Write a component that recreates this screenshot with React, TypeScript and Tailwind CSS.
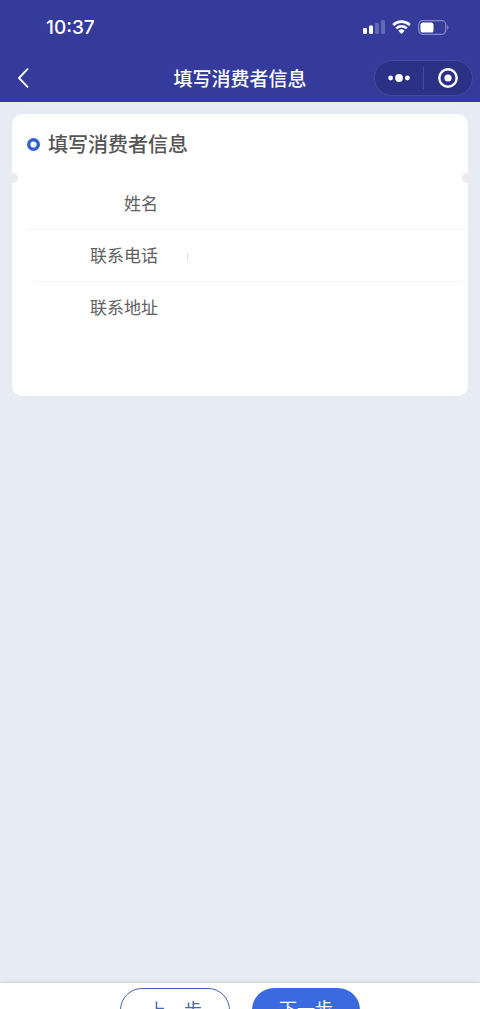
import { clsx } from 'clsx';

const fields = [
  { id: 'name', label: '姓名', type: 'text', line: 'ml-[14px]' },
  { id: 'phone', label: '联系电话', type: 'tel', line: 'ml-[22px] mr-2' },
  { id: 'address', label: '联系地址', type: 'text', line: '' },
];

function StatusBar() {
  return (
    <div className="flex h-[54px] items-center justify-between pr-[30px] pl-[46px]">
      <span className="pt-0.5 font-['Inter',sans-serif] text-[19px] leading-6 font-medium">
        10:37
      </span>
      <div className="flex items-center gap-[7px]">
        <svg width="22" height="14" viewBox="0 0 22 14" fill="currentColor">
          <rect x="0" y="8" width="4" height="6" rx="1.2" />
          <rect x="6" y="5.5" width="4" height="8.5" rx="1.2" />
          <rect x="12" y="3" width="4" height="11" rx="1.2" opacity=".24" />
          <rect x="18" y="0" width="4" height="14" rx="1.2" opacity=".24" />
        </svg>
        <svg width="19" height="14" viewBox="0 0 19 14" fill="none">
          <path
            d="M1.2 5A12 12 0 0 1 17.8 5M4.2 8.4A7.7 7.7 0 0 1 14.8 8.4"
            stroke="currentColor"
            strokeWidth="2.6"
          />
          <path
            d="M6.4 10.7a4.6 4.6 0 0 1 6.2 0L9.5 14z"
            fill="currentColor"
          />
        </svg>
        <svg width="32" height="15" viewBox="0 0 32 15" fill="none">
          <rect
            x=".7"
            y=".7"
            width="27"
            height="13.6"
            rx="4"
            stroke="currentColor"
            strokeWidth="1.2"
            opacity=".4"
          />
          <rect
            x="2.5"
            y="2.4"
            width="13"
            height="10.2"
            rx="2.2"
            fill="currentColor"
          />
          <path
            d="M29.3 5.2c1.4.5 1.4 4.1 0 4.6z"
            fill="currentColor"
            opacity=".5"
          />
        </svg>
      </div>
    </div>
  );
}

function NavBar() {
  return (
    <div className="grid h-12 grid-cols-[1fr_auto_1fr] items-center px-[7px]">
      <button aria-label="返回" className="justify-self-start pl-[9px]">
        <svg width="14" height="20" viewBox="0 0 14 20" fill="none">
          <path
            d="M11.5 1.2 3 10l8.5 8.8"
            stroke="currentColor"
            strokeWidth="1.8"
            strokeLinecap="round"
            strokeLinejoin="round"
          />
        </svg>
      </button>
      <h1 className="text-[19px] leading-7 font-medium">填写消费者信息</h1>
      <div className="flex h-9 w-[99px] items-center justify-self-end rounded-full border border-[#4349a4] bg-[#2b3185]">
        <button aria-label="更多" className="flex flex-1 justify-center">
          <svg width="22" height="8" viewBox="0 0 22 8" fill="currentColor">
            <circle cx="2.6" cy="4" r="2.4" />
            <circle cx="11" cy="4" r="3.9" />
            <circle cx="19.4" cy="4" r="2.4" />
          </svg>
        </button>
        <span className="h-[22px] w-px bg-[#454b9d]" />
        <button aria-label="关闭" className="flex flex-1 justify-center">
          <svg width="20" height="20" viewBox="0 0 20 20" fill="none">
            <circle
              cx="10"
              cy="10"
              r="8.7"
              stroke="currentColor"
              strokeWidth="2.4"
            />
            <circle cx="10" cy="10" r="3.6" fill="currentColor" />
          </svg>
        </button>
      </div>
    </div>
  );
}

function ConsumerCard() {
  return (
    <section className="relative rounded-[10px] bg-white pb-[63px] shadow-[0_0_4px_rgba(225,230,232,0.8)]">
      <div className="flex h-16 items-center gap-2 pb-1 pl-[15px]">
        <svg width="13" height="13" viewBox="0 0 13 13">
          <circle
            cx="6.5"
            cy="6.5"
            r="4.8"
            fill="white"
            stroke="#3560d2"
            strokeWidth="3.4"
          />
        </svg>
        <h2 className="text-xl leading-7 font-medium text-[#555]">
          填写消费者信息
        </h2>
      </div>
      <span className="absolute top-[59px] -left-1 size-[10px] rounded-full bg-[#e9ebef]" />
      <span className="absolute top-[59px] -right-1 size-[10px] rounded-full bg-[#e9ebef]" />
      <form>
        {fields.map(({ id, label, type, line }) => (
          <div key={id}>
            <div className="flex h-[51px] items-center pb-px">
              <label
                htmlFor={id}
                className="w-[146px] shrink-0 text-right text-[17px] leading-6 text-[#606060]"
              >
                {label}
              </label>
              {id === 'phone' && (
                <span className="mt-1 ml-[29px] h-2 w-px bg-[#dedede]" />
              )}
              <input
                id={id}
                type={type}
                className={clsx(
                  'mr-4 h-8 min-w-0 flex-1 bg-transparent text-[17px] outline-none',
                  id !== 'phone' && 'ml-[30px]',
                )}
              />
            </div>
            {line && <div className={clsx('h-px bg-[#f6f6f6]', line)} />}
          </div>
        ))}
      </form>
    </section>
  );
}

export default function App() {
  return (
    <div className="flex h-screen flex-col overflow-hidden bg-[#e8edf5] font-['Noto_Sans_CJK_SC',sans-serif]">
      <header className="shrink-0 bg-[#343b9b] text-white">
        <StatusBar />
        <NavBar />
      </header>
      <main className="min-h-0 flex-1 overflow-hidden px-3 pt-3">
        <ConsumerCard />
      </main>
      <footer className="flex h-[26px] shrink-0 items-start justify-center gap-[22px] bg-white pt-[5px] shadow-[0_-1px_3px_rgba(190,195,198,0.7)]">
        <button className="h-11 w-[110px] rounded-full border border-[#4463ad] pb-0.5 text-lg text-[#4a66b0]">
          上一步
        </button>
        <button className="h-11 w-[108px] rounded-full bg-[#3b69e0] pb-1 text-lg text-white">
          下一步
        </button>
      </footer>
    </div>
  );
}
